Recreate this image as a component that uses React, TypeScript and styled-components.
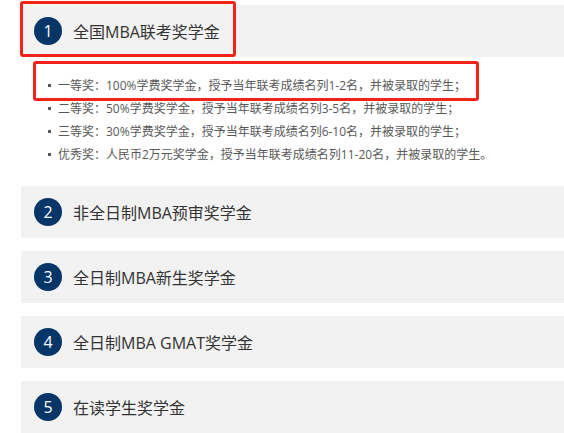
import React from "react";
import styled, { createGlobalStyle } from "styled-components";

const Global = createGlobalStyle`
  html, body { margin: 0; padding: 0; background: #fff; }
  body { font-family: "Open Sans", "Noto Sans CJK SC", sans-serif; }
`;

const Page = styled.div`
  padding: 5px 0 0 21px;
`;

const Item = styled.section`
  position: relative;
  margin-bottom: 13px;
`;

const Header = styled.div`
  display: flex;
  align-items: center;
  gap: 11px;
  height: 52px;
  padding-left: 13px;
  background: #f2f2f2;
`;

const Num = styled.span`
  display: flex;
  align-items: center;
  justify-content: center;
  width: 28px;
  height: 28px;
  border-radius: 50%;
  background: #053667;
  color: #fff;
  font-family: "Open Sans", "Noto Sans", sans-serif;
  font-size: 16px;
  line-height: 1;
`;

const Title = styled.span`
  font-family: "Open Sans", "Noto Sans CJK SC", sans-serif;
  font-size: 16px;
  color: #333;
`;

const Content = styled.ul`
  position: relative;
  list-style: none;
  margin: 0;
  padding: 17px 0 7px 27px;
`;

const Line = styled.li`
  position: relative;
  padding-left: 10px;
  font-family: "Open Sans", "Noto Sans CJK SC", sans-serif;
  font-size: 12px;
  line-height: 23px;
  color: #595959;
  white-space: nowrap;
  &::before {
    content: "";
    position: absolute;
    left: 0;
    top: 10px;
    width: 3px;
    height: 3px;
    background: #555;
  }
`;

const Highlight = styled.div<{ $top: number; $left: number; $w: number; $h: number }>`
  position: absolute;
  top: ${(p) => p.$top}px;
  left: ${(p) => p.$left}px;
  width: ${(p) => p.$w}px;
  height: ${(p) => p.$h}px;
  box-sizing: border-box;
  border: 3px solid #f3231c;
  border-radius: 3px;
  pointer-events: none;
`;

const items = [
  "全国MBA联考奖学金",
  "非全日制MBA预审奖学金",
  "全日制MBA新生奖学金",
  "全日制MBA GMAT奖学金",
  "在读学生奖学金",
];

const details = [
  "一等奖：100%学费奖学金，授予当年联考成绩名列1-2名，并被录取的学生；",
  "二等奖：50%学费奖学金，授予当年联考成绩名列3-5名，并被录取的学生；",
  "三等奖：30%学费奖学金，授予当年联考成绩名列6-10名，并被录取的学生；",
  "优秀奖：人民币2万元奖学金，授予当年联考成绩名列11-20名，并被录取的学生。",
];

export default function App() {
  return (
    <>
      <Global />
      <Page>
        {items.map((t, i) => (
          <Item key={t}>
            <Header>
              <Num>{i + 1}</Num>
              <Title>{t}</Title>
            </Header>
            {i === 0 && (
              <>
                <Highlight $top={-4} $left={-1} $w={216} $h={56} />
                <Content>
                  {details.map((d) => (
                    <Line key={d}>{d}</Line>
                  ))}
                  <Highlight $top={4} $left={12} $w={446} $h={40} />
                </Content>
              </>
            )}
          </Item>
        ))}
      </Page>
    </>
  );
}
